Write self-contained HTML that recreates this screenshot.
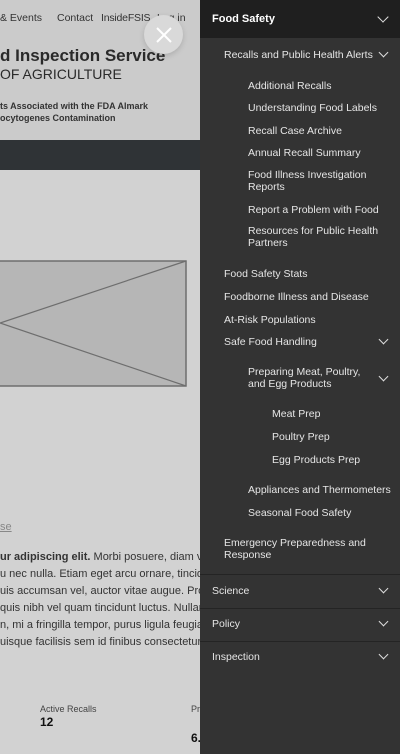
<!DOCTYPE html>
<html><head><style>
*{margin:0;padding:0;box-sizing:border-box}
body{width:400px;height:754px;overflow:hidden;position:relative;background:#d2d2d2;font-family:"Liberation Sans",sans-serif}
.a{position:absolute;white-space:nowrap;line-height:14px}
.d{color:#e6e6e6;font-size:10.5px}
.sep{position:absolute;left:200px;width:200px;height:1px;background:#242424}
.ch{position:absolute;width:8px;height:8px;border-right:1.5px solid #ddd;border-bottom:1.5px solid #ddd;transform:rotate(45deg)}
</style></head><body>
<div style="position:absolute;left:0;top:0;width:200px;height:140px;background:#cbcbcb"></div>
<div class="a" style="left:0;top:11px;font-size:10.5px;color:#333">&amp; Events</div>
<div class="a" style="left:57px;top:11px;font-size:10.5px;color:#333">Contact</div>
<div class="a" style="left:101px;top:11px;font-size:10.5px;color:#333;letter-spacing:-0.2px">InsideFSIS</div>
<div class="a" style="left:157px;top:11px;font-size:10.5px;color:#333">Log in</div>
<div class="a" style="left:0;top:46px;font-size:17px;line-height:20px;color:#2a2a2a;font-weight:bold">d Inspection Service</div>
<div class="a" style="left:0;top:66px;font-size:14px;line-height:16px;color:#2a2a2a">OF AGRICULTURE</div>
<div class="a" style="left:0;top:100px;font-size:9px;line-height:12px;color:#333;font-weight:bold">ts Associated with the FDA Almark<br>ocytogenes Contamination</div>
<div style="position:absolute;left:0;top:140px;width:200px;height:30px;background:#2f3336"></div>
<div style="position:absolute;left:144px;top:15px;width:39px;height:39px;border-radius:50%;background:#d9d9d9;box-shadow:0 2px 6px rgba(0,0,0,.15)"></div>
<svg style="position:absolute;left:156px;top:27px" width="16" height="16"><path d="M1 1L15 15M15 1L1 15" stroke="#fff" stroke-width="2"/></svg>
<svg style="position:absolute;left:0;top:260px" width="190" height="128"><rect x="-2" y="1" width="188" height="125" fill="#b6b6b6" stroke="#6e6e6e" stroke-width="1.5"/><path d="M186 1L0 63L186 126" fill="none" stroke="#6e6e6e" stroke-width="1.2"/></svg>
<div class="a" style="left:0;top:520px;font-size:11px;color:#888;text-decoration:underline">se</div>
<div class="a" style="left:0;top:549px;font-size:11px;line-height:17px;color:#333"><b>ur adipiscing elit.</b> Morbi posuere, diam vel<br>u nec nulla. Etiam eget arcu ornare, tincidun<br>uis accumsan vel, auctor vitae augue. Proin<br>quis nibh vel quam tincidunt luctus. Nullam<br>n, mi a fringilla tempor, purus ligula feugiat<br>uisque facilisis sem id finibus consectetur. D</div>
<div class="a" style="left:40px;top:702px;font-size:9px;color:#444">Active Recalls</div>
<div class="a" style="left:40px;top:715px;font-size:12px;color:#111;font-weight:bold">12</div>
<div class="a" style="left:191px;top:702px;font-size:9px;color:#444">Pr</div>
<div class="a" style="left:191px;top:731px;font-size:12px;color:#111;font-weight:bold">6.</div>

<div style="position:absolute;left:200px;top:0;width:200px;height:754px;background:#333"></div>
<div style="position:absolute;left:200px;top:0;width:200px;height:38px;background:#1f1f1f"></div>
<div class="a" style="left:212px;top:12px;font-size:11px;color:#fff;font-weight:bold">Food Safety</div>
<div class="ch" style="left:379px;top:13px"></div>
<div class="a d" style="left:224px;top:48px">Recalls and Public Health Alerts</div>
<div class="ch" style="left:380px;top:49px;width:7px;height:7px"></div>
<div class="a d" style="left:248px;top:79px">Additional Recalls</div>
<div class="a d" style="left:248px;top:101px">Understanding Food Labels</div>
<div class="a d" style="left:248px;top:124px">Recall Case Archive</div>
<div class="a d" style="left:248px;top:146px">Annual Recall Summary</div>
<div class="a d" style="left:248px;top:169px;line-height:12px">Food Illness Investigation<br>Reports</div>
<div class="a d" style="left:248px;top:203px">Report a Problem with Food</div>
<div class="a d" style="left:248px;top:225px;line-height:12px">Resources for Public Health<br>Partners</div>
<div class="a d" style="left:224px;top:267px">Food Safety Stats</div>
<div class="a d" style="left:224px;top:290px">Foodborne Illness and Disease</div>
<div class="a d" style="left:224px;top:313px">At-Risk Populations</div>
<div class="a d" style="left:224px;top:335px">Safe Food Handling</div>
<div class="ch" style="left:380px;top:336px;width:7px;height:7px"></div>
<div class="a d" style="left:248px;top:366px;line-height:12px">Preparing Meat, Poultry,<br>and Egg Products</div>
<div class="ch" style="left:380px;top:373px;width:7px;height:7px"></div>
<div class="a d" style="left:272px;top:407px">Meat Prep</div>
<div class="a d" style="left:272px;top:430px">Poultry Prep</div>
<div class="a d" style="left:272px;top:453px">Egg Products Prep</div>
<div class="a d" style="left:248px;top:483px">Appliances and Thermometers</div>
<div class="a d" style="left:248px;top:506px">Seasonal Food Safety</div>
<div class="a d" style="left:224px;top:537px;line-height:12px">Emergency Preparedness and<br>Response</div>
<div class="sep" style="top:574px"></div>
<div class="a d" style="left:212px;top:584px">Science</div>
<div class="ch" style="left:380px;top:585px;width:7px;height:7px"></div>
<div class="sep" style="top:608px"></div>
<div class="a d" style="left:212px;top:617px">Policy</div>
<div class="ch" style="left:380px;top:618px;width:7px;height:7px"></div>
<div class="sep" style="top:641px"></div>
<div class="a d" style="left:212px;top:650px">Inspection</div>
<div class="ch" style="left:380px;top:651px;width:7px;height:7px"></div>
</body></html>
